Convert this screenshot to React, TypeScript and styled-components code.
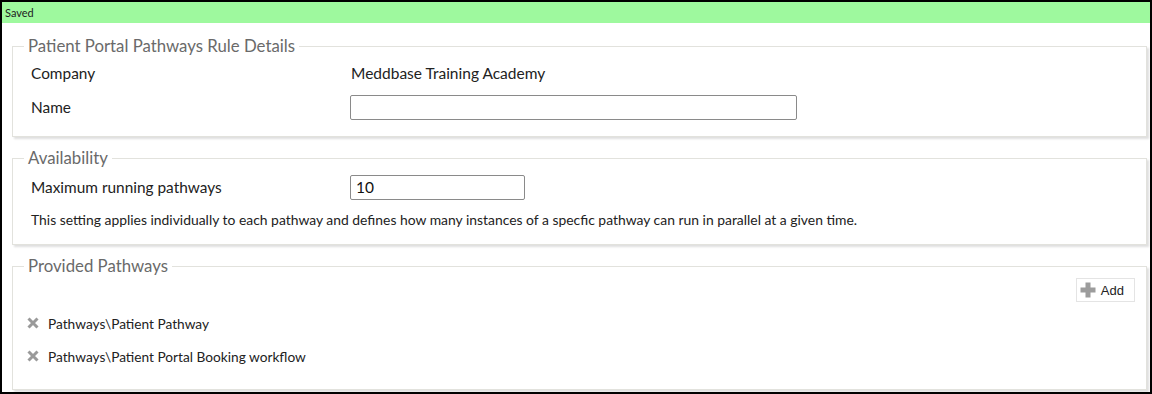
import React from "react";
import styled, { createGlobalStyle } from "styled-components";

const Global = createGlobalStyle`
  html, body { margin: 0; padding: 0; background: #fff; }
  body { font-family: Lato, "Open Sans", sans-serif; }
  * { box-sizing: border-box; }
`;

const Frame = styled.div`
  width: 1152px;
  height: 394px;
  border: 2px solid #000;
  background: #fff;
  overflow: hidden;
`;

const StatusBar = styled.div`
  height: 21px;
  background: #9ef99e;
  font-size: 11px;
  line-height: 21px;
  padding-left: 3px;
  color: #222;
`;

const Content = styled.div`
  padding: 13px 3px 0 10px;
  display: flex;
  flex-direction: column;
  gap: 11px;
`;

const Panel = styled.fieldset<{ $pt: number; $pb: number }>`
  margin: 0;
  border: 1px solid #e2e2dd;
  box-shadow: 2px 2px 2px rgba(0, 0, 0, 0.13);
  padding: ${(p) => p.$pt}px 11px ${(p) => p.$pb}px 11px;
  min-width: 0;
`;

const Legend = styled.legend`
  padding: 0 4px;
  font-size: 16.8px;
  line-height: 20px;
  color: #6a6a6a;
`;

const FormRow = styled.div<{ $h: number }>`
  display: grid;
  grid-template-columns: 319px 1fr;
  align-items: center;
  height: ${(p) => p.$h}px;
  line-height: 20px;
  padding-left: 7px;
`;

const Rows = styled.div<{ $gap: number }>`
  display: flex;
  flex-direction: column;
  gap: ${(p) => p.$gap}px;
`;

const Label = styled.div`
  font-size: 15.4px;
  color: #222;
`;

const Value = styled.div`
  font-size: 15.5px;
  color: #222;
  padding-left: 1px;
`;

const TextInput = styled.input<{ $w: number }>`
  width: ${(p) => p.$w}px;
  height: 25px;
  border: 1px solid #8a8a8a;
  border-radius: 2px;
  font-family: Lato, "Open Sans", sans-serif;
  font-size: 15.5px;
  padding: 0 5px;
  color: #111;
  outline: none;
`;

const Note = styled.div`
  font-size: 13.9px;
  line-height: 16px;
  color: #222;
  padding-left: 7px;
  margin-top: 12px;
`;

const Toolbar = styled.div`
  display: flex;
  justify-content: flex-end;
  padding-top: 2px;
`;

const AddButton = styled.button`
  display: inline-flex;
  align-items: center;
  gap: 5px;
  height: 24px;
  padding: 0 10px 0 3px;
  border: 1px solid #e4e4e4;
  background: #fff;
  font-family: "Liberation Sans", Arial, sans-serif;
  font-size: 13px;
  color: #222;
  cursor: pointer;
`;

const List = styled.div`
  display: flex;
  flex-direction: column;
  gap: 11px;
  margin-top: 10px;
`;

const Item = styled.div`
  display: flex;
  align-items: center;
  gap: 9px;
  height: 22px;
  padding-left: 3px;
  font-size: 13.7px;
  color: #222;
`;

const PlusIcon = () => (
  <svg width="16" height="16" viewBox="0 0 16 16">
    <path d="M5.5 0.5h5v5h5v5h-5v5h-5v-5h-5v-5h5z" fill="#9c9c9c" />
  </svg>
);

const CrossIcon = () => (
  <svg width="12" height="12" viewBox="0 0 12 12">
    <path d="M1.5 1.5L10.5 10.5M10.5 1.5L1.5 10.5" stroke="#9a9a9a" strokeWidth="3" />
  </svg>
);

export default function App() {
  return (
    <>
      <Global />
      <Frame>
        <StatusBar>Saved</StatusBar>
        <Content>
          <Panel $pt={4} $pb={16}>
            <Legend>Patient Portal Pathways Rule Details</Legend>
            <Rows $gap={8}>
              <FormRow $h={26}>
                <Label>Company</Label>
                <Value>Meddbase Training Academy</Value>
              </FormRow>
              <FormRow $h={26}>
                <Label>Name</Label>
                <TextInput $w={447} defaultValue="" />
              </FormRow>
            </Rows>
          </Panel>
          <Panel $pt={6} $pb={16}>
            <Legend>Availability</Legend>
            <FormRow $h={26}>
              <Label>Maximum running pathways</Label>
              <TextInput $w={175} defaultValue="10" />
            </FormRow>
            <Note>
              This setting applies individually to each pathway and defines how many instances of a specfic pathway can run in parallel at a given time.
            </Note>
          </Panel>
          <Panel $pt={0} $pb={22}>
            <Legend>Provided Pathways</Legend>
            <Toolbar>
              <AddButton>
                <PlusIcon />
                Add
              </AddButton>
            </Toolbar>
            <List>
              <Item>
                <CrossIcon />
                Pathways\Patient Pathway
              </Item>
              <Item>
                <CrossIcon />
                Pathways\Patient Portal Booking workflow
              </Item>
            </List>
          </Panel>
        </Content>
      </Frame>
    </>
  );
}
